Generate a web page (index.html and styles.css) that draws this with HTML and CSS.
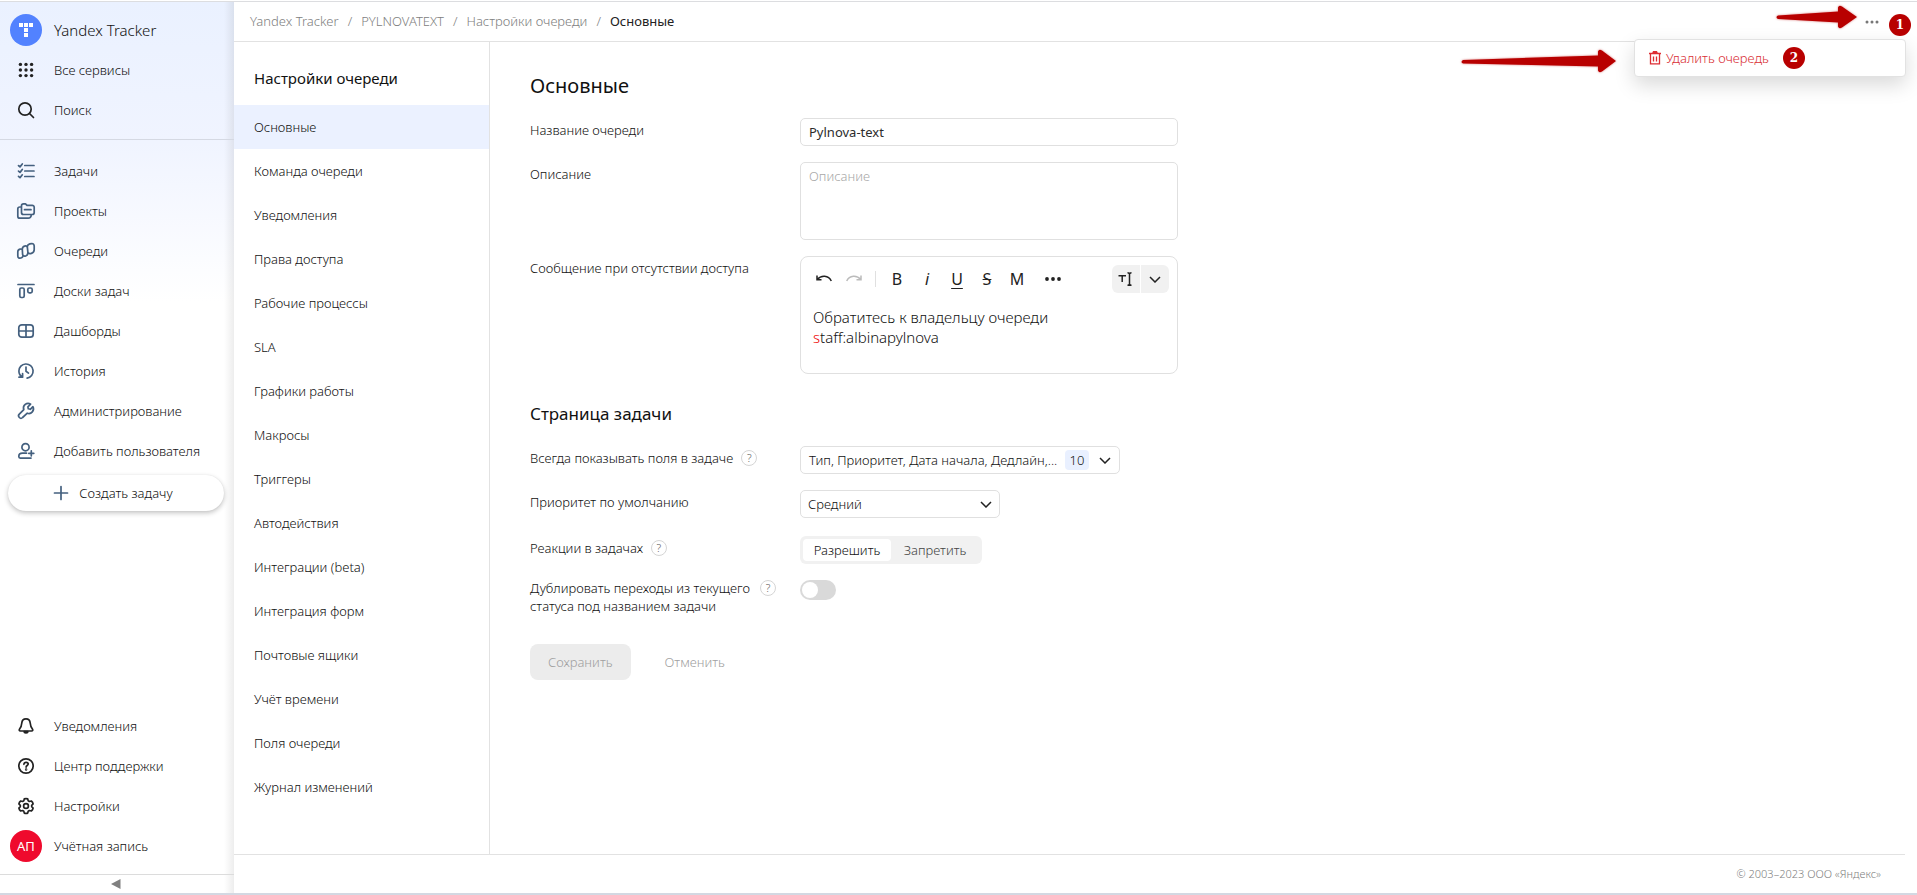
FILE: index.html
```html
<!DOCTYPE html>
<html lang="ru">
<head>
<meta charset="utf-8">
<meta name="viewport" content="width=device-width, initial-scale=1">
<title>Основные — Настройки очереди</title>
<link rel="stylesheet" href="styles.css">
</head>
<body>
<div class="app">
  <aside class="sidebar">
    <nav class="side-group side-top">
      <a class="side-item brand" href="#">
        <span class="side-icon"><svg width="32" height="32" viewBox="0 0 32 32"><circle cx="16" cy="16" r="16" fill="#5282ff"/><path fill="#fff" d="M9 9h4v4H9zM14 9h4v4h-4zM19 9h4v4h-4zM14 14h4v4h-4zM14 19h4v4h-4z"/></svg></span>
        <span>Yandex Tracker</span>
      </a>
      <a class="side-item" href="#">
        <span class="side-icon"><svg width="16" height="16" viewBox="0 0 16 16" fill="#222"><circle cx="2.4" cy="2.4" r="1.7"/><circle cx="8" cy="2.4" r="1.7"/><circle cx="13.6" cy="2.4" r="1.7"/><circle cx="2.4" cy="8" r="1.7"/><circle cx="8" cy="8" r="1.7"/><circle cx="13.6" cy="8" r="1.7"/><circle cx="2.4" cy="13.6" r="1.7"/><circle cx="8" cy="13.6" r="1.7"/><circle cx="13.6" cy="13.6" r="1.7"/></svg></span>
        <span>Все сервисы</span>
      </a>
      <a class="side-item" href="#">
        <span class="side-icon"><svg class="ico ico-dark" viewBox="0 0 16 16"><circle cx="7" cy="7" r="6.2"/><path d="M11.5 11.5 15.5 15.5"/></svg></span>
        <span>Поиск</span>
      </a>
    </nav>
    <nav class="side-group side-main">
      <a class="side-item" href="#">
        <span class="side-icon"><svg class="ico" viewBox="0 0 16 16"><path d="M6.8 2.5H16M6.8 8H16M6.8 13.5H16M.5 2.6l1.500 1.300L4.300 1M.5 8.100l1.500 1.300 2.300-2.900M.5 13.400l1.500 1.300 2.300-2.900"/></svg></span>
        <span>Задачи</span>
      </a>
      <a class="side-item" href="#">
        <span class="side-icon"><svg class="ico ico-wide" viewBox="0 0 18 16"><path d="M4.5 3.2V2.8A2 2 0 0 1 6.500.8H8.500L10 2.300h5.200a2 2 0 0 1 2 2V9.500a2 2 0 0 1-2 2H6.500a2 2 0 0 1-2-2ZM4.500 4H2.800a2 2 0 0 0-2 2v7.200a2 2 0 0 0 2 2h8.400a3 3 0 0 0 3-3M7.500 6.700H14"/></svg></span>
        <span>Проекты</span>
      </a>
      <a class="side-item" href="#">
        <span class="side-icon"><svg class="ico ico-wide" viewBox="0 0 18 16"><g fill="#fafcff"><path d="M.8 8.800q0-2.200 2.200-2.700 3.100-.6 3.100 2.200v3.900q0 2.200-2.200 2.800-3.100.7-3.100-2.300Z"/><path d="M5.300 6.300q0-2.500 2.300-3.200 3.100-.8 3.300 2.200v4.400q0 2.600-2.200 3.300-2.300.7-3.100-1.500Z"/><path d="M10.300 3.700q.2-2.100 2.500-2.800 4-1.200 4.400 2v3.800q0 2.800-2.800 3.700-2.800.9-3.500-1.100Z"/></g></svg></span>
        <span>Очереди</span>
      </a>
      <a class="side-item" href="#">
        <span class="side-icon"><svg class="ico" viewBox="0 0 16 16"><path d="M0 1.500h16"/><rect x="1.800" y="5" width="4.400" height="9.500" rx="1.500"/><rect x="9.800" y="5" width="4.400" height="4.800" rx="1.500"/></svg></span>
        <span>Доски задач</span>
      </a>
      <a class="side-item" href="#">
        <span class="side-icon"><svg class="ico" viewBox="0 0 16 16"><rect x=".8" y="1.800" width="14.400" height="12.400" rx="3"/><path d="M8 2v12M1 8h14"/></svg></span>
        <span>Дашборды</span>
      </a>
      <a class="side-item" href="#">
        <span class="side-icon"><svg class="ico" viewBox="0 0 16 16"><path d="M4.300 14C2 12.700.9 10.500.9 8.100a7.100 7.100 0 1 1 8.200 7M1 14.200h3.600v-3.700M8 4v4.200l2.500 1.900"/></svg></span>
        <span>История</span>
      </a>
      <a class="side-item" href="#">
        <span class="side-icon"><svg class="ico" viewBox="0 0 16 16"><path d="M12.600 1.100a4.600 4.600 0 0 0-6.800 5.500L1.300 11.200a2.100 2.100 0 0 0 3.300 3.300l4.700-4.300a4.600 4.600 0 0 0 5.600-6.500l-2.600 2.600-2-.5-.4-2Z"/></svg></span>
        <span>Администрирование</span>
      </a>
      <a class="side-item" href="#">
        <span class="side-icon"><svg class="ico" viewBox="0 0 16 16"><circle cx="7.500" cy="4.200" r="3.600"/><path d="M8.500 10.200H4.500c-2.300 0-3.700 1.400-3.700 3.300 0 1 .6 1.600 1.500 1.600H13M13.300 7.800v5M10.800 10.300h5"/></svg></span>
        <span>Добавить пользователя</span>
      </a>
      <button class="create" type="button"><svg class="ico" viewBox="0 0 16 16"><path d="M8 1.500v13M1.500 8h13"/></svg>Создать задачу</button>
    </nav>
    <nav class="side-group side-bottom">
      <a class="side-item" href="#">
        <span class="side-icon"><svg class="ico ico-dark" viewBox="0 0 16 16"><path d="M8 .8c-2.700 0-4 1.800-4.200 4.200C3.500 8.500 2.700 9.700 1.600 11c-.8 1.200-.3 2 .8 2h11.200c1.100 0 1.600-.8.8-2-1.100-1.300-1.900-2.500-2.200-6C12 2.600 10.700.8 8 .8Z"/><path d="M6.200 13.600a1.800 1.400 0 0 0 3.600 0Z" fill="#222"/></svg></span>
        <span>Уведомления</span>
      </a>
      <a class="side-item" href="#">
        <span class="side-icon"><svg class="ico ico-dark" viewBox="0 0 16 16"><circle cx="8" cy="8" r="7.200"/><path d="M5.900 6.300c.1-1.300 1-2 2.200-2s2.100.7 2.100 1.800c0 1.400-2.100 1.500-2.100 3"/><circle cx="8.100" cy="11.500" r=".4"/></svg></span>
        <span>Центр поддержки</span>
      </a>
      <a class="side-item" href="#">
        <span class="side-icon"><svg class="ico ico-dark" viewBox="0 0 16 16"><circle cx="8" cy="8" r="2.400"/><path d="M6.300.9q1.700-.7 3.400 0l.5 1.900 1.200.7 1.900-.5q1.500 1.100 1.800 2.900L13.700 7.300v1.400l1.400 1.400q-.3 1.800-1.800 2.900l-1.900-.5-1.200.7-.5 1.900q-1.700.7-3.400 0l-.5-1.900-1.200-.7-1.900.5Q1.200 11.900.9 10.100l1.400-1.400V7.300L.9 5.900Q1.200 4.100 2.700 3l1.900.5 1.200-.7Z"/></svg></span>
        <span>Настройки</span>
      </a>
      <a class="side-item" href="#">
        <span class="side-icon"><span class="avatar">АП</span></span>
        <span>Учётная запись</span>
      </a>
    </nav>
    <button class="collapse" type="button" aria-label="Свернуть"><svg width="10" height="10" viewBox="0 0 10 10"><path d="M0 5 9.500 0v10Z" fill="#808080"/></svg></button>
  </aside>

  <div class="page">
    <header class="header">
      <nav class="crumbs">
        <a href="#">Yandex Tracker</a><span>/</span><a href="#">PYLNOVATEXT</a><span>/</span><a href="#">Настройки очереди</a><span>/</span><b>Основные</b>
      </nav>
      <div class="more">
        <button class="more-btn" type="button" aria-label="Ещё"><svg width="14" height="4" viewBox="0 0 14 4" fill="#777"><circle cx="2" cy="2" r="1.500"/><circle cx="7" cy="2" r="1.500"/><circle cx="12" cy="2" r="1.500"/></svg></button>
        <svg class="arrow arrow-first" width="82" height="24" viewBox="0 0 82 24"><path d="M2 10.500 62 6.500V2.500Q63-.5 66 1.500L81 12 66 22.500Q63 24.500 62 21.500V17.500L2 14Q-1 12 2 10.500Z"/></svg>
        <span class="mark mark-first">1</span>
        <div class="menu">
          <button class="menu-item" type="button"><svg width="12" height="14" viewBox="0 0 12 14"><path d="M0 2.500h12M1.500 3v9.800h9V3M4.500 5.500v5M7.500 5.500v5" fill="none" stroke="#dd2d33" stroke-width="1.300"/><path d="M3 2.500 4 0h4l1 2.500Z" fill="#dd2d33"/></svg>Удалить очередь</button>
          <span class="mark">2</span>
          <svg class="arrow arrow-second" width="156" height="24" viewBox="0 0 156 24"><path d="M2 11 137 6.500V2.500Q138-.5 141 1.500L155 12 141 22.500Q138 24.500 137 21.500V17.500L2 14.500Q-1 13 2 11Z"/></svg>
        </div>
      </div>
    </header>

    <div class="body">
      <nav class="settings">
        <h2>Настройки очереди</h2>
        <a class="active" href="#">Основные</a>
        <a href="#">Команда очереди</a>
        <a href="#">Уведомления</a>
        <a href="#">Права доступа</a>
        <a href="#">Рабочие процессы</a>
        <a href="#">SLA</a>
        <a href="#">Графики работы</a>
        <a href="#">Макросы</a>
        <a href="#">Триггеры</a>
        <a href="#">Автодействия</a>
        <a href="#">Интеграции (beta)</a>
        <a href="#">Интеграция форм</a>
        <a href="#">Почтовые ящики</a>
        <a href="#">Учёт времени</a>
        <a href="#">Поля очереди</a>
        <a href="#">Журнал изменений</a>
      </nav>

      <main class="content">
        <form>
          <h1>Основные</h1>
          <div class="row">
            <label class="label" for="name">Название очереди</label>
            <input class="box name" id="name" type="text" value="Pylnova-text">
          </div>
          <div class="row">
            <label class="label" for="desc">Описание</label>
            <textarea class="box area" id="desc" placeholder="Описание"></textarea>
          </div>
          <div class="row">
            <span class="label" id="msg-label">Сообщение при отсутствии доступа</span>
            <div class="editor">
              <div class="toolbar">
                <button class="tool" type="button" aria-label="Отменить действие"><svg width="16" height="10" viewBox="0 0 16 10"><path d="M1 1.500v4.200h4.500M1.200 5.500C5 .8 12.500.8 15.300 7"/></svg></button>
                <button class="tool muted" type="button" aria-label="Повторить"><svg width="16" height="10" viewBox="0 0 16 10"><path d="M15 1.500v4.200h-4.500M14.800 5.500C11 .8 3.500.8.7 7"/></svg></button>
                <span class="sep"></span>
                <button class="tool" type="button">B</button>
                <button class="tool italic" type="button">i</button>
                <button class="tool under" type="button">U</button>
                <button class="tool strike" type="button">S</button>
                <button class="tool" type="button">M</button>
                <button class="tool tool-more" type="button" aria-label="Ещё"><svg class="dots" width="18" height="4" viewBox="0 0 18 4"><circle cx="3" cy="2" r="1.900"/><circle cx="9" cy="2" r="1.900"/><circle cx="15" cy="2" r="1.900"/></svg></button>
                <div class="mode">
                  <button type="button" aria-label="Режим"><svg width="16" height="14" viewBox="0 0 16 14"><path d="M.5 3.800h7.500M4.200 3.800V10M9.500.8c1.200 0 2 .3 2 1.200v10c0 .9-.8 1.200-2 1.200M13.500.8c-1.200 0-2 .3-2 1.200M13.500 13.200c-1.200 0-2-.3-2-1.200"/></svg></button>
                  <button type="button" aria-label="Выбор режима"><svg width="12" height="7" viewBox="0 0 12 7"><path d="m1 1 5 5 5-5"/></svg></button>
                </div>
              </div>
              <div class="editor-text" role="textbox" aria-labelledby="msg-label" contenteditable="true" spellcheck="false">Обратитесь к владельцу очереди<br><span class="red">s</span>taff:albinapylnova</div>
            </div>
          </div>

          <h2>Страница задачи</h2>
          <div class="row">
            <div class="label"><label for="fields">Всегда показывать поля в задаче</label><button class="help" type="button" aria-label="Справка">?</button></div>
            <button class="box fields" id="fields" type="button"><span class="fields-text">Тип, Приоритет, Дата начала, Дедлайн,...</span><span class="count">10</span><svg class="chev" width="12" height="7" viewBox="0 0 12 7"><path d="m1 1 5 5 5-5"/></svg></button>
          </div>
          <div class="row">
            <label class="label" for="prio">Приоритет по умолчанию</label>
            <div class="select">
              <select class="box" id="prio"><option>Средний</option></select>
              <svg class="chev" width="12" height="7" viewBox="0 0 12 7"><path d="m1 1 5 5 5-5"/></svg>
            </div>
          </div>
          <div class="row row-segment">
            <div class="label"><span id="react">Реакции в задачах</span><button class="help" type="button" aria-label="Справка">?</button></div>
            <div class="segment" role="radiogroup" aria-labelledby="react">
              <label><input type="radio" name="react" checked><span>Разрешить</span></label>
              <label><input type="radio" name="react"><span>Запретить</span></label>
            </div>
          </div>
          <div class="row row-toggle">
            <div class="label"><label for="dup">Дублировать переходы из текущего<br>статуса под названием задачи</label><button class="help" type="button" aria-label="Справка">?</button></div>
            <input class="toggle" id="dup" type="checkbox">
          </div>
          <div class="actions">
            <button class="save" type="submit" disabled>Сохранить</button>
            <button class="cancel" type="button" disabled>Отменить</button>
          </div>
        </form>
      </main>
    </div>

    <footer class="footer">© 2003–2023 ООО «Яндекс»</footer>
  </div>
</div>
</body>
</html>
```
FILE: styles.css
```css
* { box-sizing: border-box; }

body {
  margin: 0;
  font: 350 13px/18px "Noto Sans", "Open Sans", sans-serif;
  color: #111;
  background: #fff;
}

button, input, select, textarea { font: inherit; color: inherit; }
button { padding: 0; border: 0; background: none; }
a { color: inherit; text-decoration: none; }
h1, h2 { margin: 0; font-weight: 450; color: #111; }
svg { display: block; flex: none; }

.app {
  display: flex;
  min-height: 100vh;
  border-top: 1px solid #fff;
  border-bottom: 2px solid #d3d8e2;
}

/* Sidebar */
.sidebar {
  display: flex;
  flex-direction: column;
  flex: none;
  width: 234px;
  border-top: 1px solid #dcdde0;
  background:
    linear-gradient(to left, rgba(0, 0, 0, .07), rgba(0, 0, 0, 0) 10px),
    linear-gradient(#eaf1ff, #f0f4ff 140px, #fff 300px);
}
.side-top { padding: 8px 0 9px; border-bottom: 1px solid #d5d9e3; }
.side-main { padding-top: 11px; }
.side-bottom { margin-top: auto; padding-bottom: 8px; }
.side-item { display: flex; align-items: center; height: 40px; }
.side-icon { display: flex; justify-content: center; width: 52px; margin-right: 2px; }
.brand { font-size: 15px; }

.ico { width: 16px; height: 16px; overflow: visible; fill: none; stroke: #44607f; stroke-width: 1.7; stroke-linecap: round; stroke-linejoin: round; }
.ico-wide { width: 18px; }
.ico-dark { stroke: #222; }

.create {
  display: flex;
  align-items: center;
  justify-content: center;
  gap: 10px;
  width: calc(100% - 18px);
  height: 36px;
  margin: 4px 10px 0 8px;
  padding-right: 6px;
  border-radius: 18px;
  background: #fff;
  box-shadow: 0 2px 5px rgba(0, 0, 0, .24), 0 0 1px rgba(0, 0, 0, .1);
}
.avatar { width: 32px; height: 32px; border-radius: 50%; background: #ef0a2d; color: #fff; font-weight: 400; line-height: 32px; text-align: center; }
.collapse { display: flex; align-items: center; justify-content: center; height: 19px; padding-right: 2px; border-top: 1px solid #dcdcdc; }

/* Page */
.page { display: flex; flex-direction: column; flex: 1; min-width: 0; padding-right: 12px; border-top: 1px solid #dcdde0; }
.header { display: flex; align-items: center; justify-content: space-between; height: 40px; padding: 0 26px 0 16px; border-bottom: 1px solid #e2e2e2; }
.crumbs { display: flex; gap: 9px; padding-bottom: 2px; color: #808080; }
.crumbs b { font-weight: 400; color: #222; }

.more { position: relative; }
.more-btn { display: flex; align-items: center; height: 28px; }
.menu {
  position: absolute;
  z-index: 2;
  top: 31px;
  right: -27px;
  display: flex;
  align-items: center;
  gap: 14px;
  width: 272px;
  height: 38px;
  padding: 0 14px;
  border: 1px solid #e2e2e2;
  border-radius: 4px;
  background: #fff;
  box-shadow: 0 8px 20px rgba(0, 0, 0, .15);
}
.menu-item { display: flex; align-items: center; gap: 5px; color: #d92f35; }

.mark {
  width: 22px;
  height: 22px;
  border-radius: 50%;
  background: #b80000;
  color: #fff;
  font: bold 12px/22px "DejaVu Serif", serif;
  text-align: center;
}
.mark-first { position: absolute; z-index: 3; top: 6px; left: 24px; }
.arrow { position: absolute; fill: #b80000; filter: drop-shadow(0 0 1px rgba(184, 0, 0, .5)); }
.arrow-first { top: -3px; right: 21px; }
.arrow-second { top: 9px; right: 288px; }

.body { display: flex; flex: 1; }

.settings { flex: none; width: 256px; border-right: 1px solid #e2e2e2; }
.settings h2 { padding: 25px 20px 16px; font-size: 15px; line-height: 22px; }
.settings a { display: block; padding: 13px 20px; }
.settings .active { background: #ebf1ff; }

/* Form */
.content { flex: 1; padding: 30px 40px 24px; }
.content h1 { margin-bottom: 18px; font-size: 20px; line-height: 28px; }
.content h2 { margin: 28px 0 20px; font-size: 17px; line-height: 24px; }
.row { display: grid; grid-template-columns: 270px minmax(0, 378px); align-items: start; margin-bottom: 16px; }
.row-segment { margin: 18px 0 12px; }
.label { display: flex; padding-top: 3px; }
.row-toggle .label { width: 246px; }
.row-toggle .help { margin-left: auto; }
.box { width: 100%; height: 28px; padding: 0 8px; border: 1px solid #e0e0e0; border-radius: 5px; background: #fff; }
.name { font-weight: 400; color: #2c2c2c; }
.area { display: block; height: 78px; padding: 4px 8px; resize: none; }
.area::placeholder { color: #a8a8a8; }

.help {
  flex: none;
  width: 16px;
  height: 16px;
  margin-top: 1px;
  margin-left: 8px;
  border: 1px solid #d5d5d5;
  border-radius: 50%;
  color: #666;
  font-size: 11px;
  line-height: 14px;
}

.editor { padding: 8px; border: 1px solid #e0e0e0; border-radius: 8px; }
.toolbar { display: flex; align-items: center; height: 28px; }
.tool { display: flex; align-items: center; justify-content: center; width: 30px; height: 28px; font-size: 16px; font-weight: 400; color: #222; }
.tool-more { margin-left: 6px; }
.tool svg, .mode svg, .chev { fill: none; stroke: #222; stroke-width: 1.5; }
.tool .dots { fill: #222; stroke: none; }
.tool.muted svg { stroke: #bbb; }
.italic { font-style: italic; }
.under { text-decoration: underline; text-underline-offset: 3px; }
.strike { text-decoration: line-through; }
.sep { width: 1px; height: 16px; margin: 0 6px; background: #e0e0e0; }
.mode { display: flex; gap: 1px; margin-left: auto; border-radius: 6px; overflow: hidden; }
.mode button { display: flex; align-items: center; justify-content: center; width: 28px; height: 28px; background: #f1f1f1; }
.editor-text { min-height: 72px; padding: 14px 4px; font-size: 15px; line-height: 20px; outline: 0; }
.red { color: #e00; }

.fields { display: flex; align-items: center; width: 320px; }
.fields-text { flex: 1; white-space: nowrap; text-align: left; }
.count { width: 24px; height: 20px; margin: 0 10px 0 4px; border-radius: 4px; background: #e9f0ff; line-height: 20px; }
.select { display: grid; align-items: center; width: 200px; }
.select > * { grid-area: 1 / 1; }
.select select { appearance: none; padding: 0 7px; }
.select .chev { justify-self: end; margin-right: 8px; pointer-events: none; }

.segment { display: flex; width: 182px; height: 28px; padding: 3px; border-radius: 6px; background: #f1f1f1; }
.segment label { position: relative; flex: 1; color: #444; line-height: 22px; text-align: center; }
.segment input { position: absolute; inset: 0; margin: 0; opacity: 0; }
.segment span { display: block; border-radius: 4px; }
.segment input:checked + span { background: #fff; color: #111; }

.toggle { appearance: none; width: 36px; height: 20px; margin: 4px 0 0; padding: 2px; border-radius: 10px; background: #d9d9d9; }
.toggle::before { content: ""; display: block; width: 16px; height: 16px; border-radius: 50%; background: #fff; }
.toggle:checked::before { margin-left: auto; }

.actions { display: flex; margin-top: 29px; }
.actions button { height: 36px; padding: 0 18px; border-radius: 8px; color: #a0a0a0; }
.actions .save { background: #ececec; }
.actions .cancel { margin-left: 16px; }

.footer { padding: 10px 24px; border-top: 1px solid #e2e2e2; color: #808080; font-size: 11px; text-align: right; }
```
